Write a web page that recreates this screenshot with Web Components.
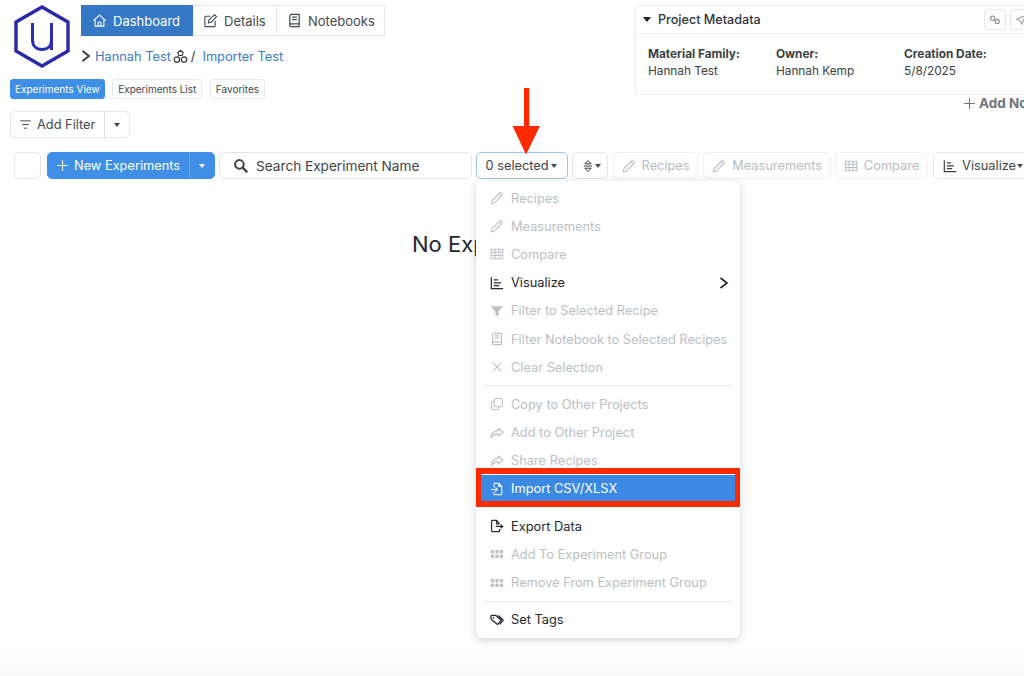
<!DOCTYPE html>
<html>
<head>
<meta charset="utf-8">
<title>Experiments</title>
<style>
html, body { margin: 0; background: #fff; }
body { width: 1024px; height: 676px; overflow: hidden; font-family: Inter, "Noto Sans", sans-serif; color: #2b3038; }
</style>
</head>
<body>
<app-page></app-page>
<script>
const ICONS = {
    home: '<path d="M1.500 8.200L8 2.300l6.500 5.900M3.300 7v7h9.400V7M6.500 14V9.800h3V14" fill="none" stroke="currentColor" stroke-width="1.100" stroke-linejoin="round"/>',
    edit: '<path d="M13 8.500v4.700a1.300 1.300 0 0 1-1.300 1.300H3.300A1.300 1.300 0 0 1 2 13.200V4.800a1.300 1.300 0 0 1 1.300-1.300h4.700M6.300 7.700l6-6 2.200 2.200-6 6-2.800.6z" fill="none" stroke="currentColor" stroke-width="1.200" stroke-linejoin="round"/>',
    book: '<path d="M3 3a1.500 1.500 0 0 1 1.500-1.500H13v10H4.500A1.500 1.500 0 0 0 3 13zM3 13a1.500 1.500 0 0 0 1.500 1.500H13v-3M5.500 4.500h5M5.500 7h5" fill="none" stroke="currentColor" stroke-width="1.300"/>',
    filter: '<path d="M2 3.500h12M4.500 8h7M6.500 12.500h3" fill="none" stroke="currentColor" stroke-width="1.200" stroke-linecap="round"/>',
    plus: '<path d="M8 2v12M2 8h12" fill="none" stroke="currentColor" stroke-width="1.300" stroke-linecap="round"/>',
    search: '<circle cx="6.800" cy="6.800" r="4.600" fill="none" stroke="currentColor" stroke-width="2.100"/><path d="M10.300 10.300l4.200 4.200" stroke="currentColor" stroke-width="2.400" stroke-linecap="round"/>',
    sort: '<path d="M4.800 5.800L8 2.500l3.200 3.300zM4.800 10.200L8 13.500l3.200-3.300z" fill="none" stroke="currentColor" stroke-width="1" stroke-linejoin="round"/><path d="M3.800 8h8.400" stroke="currentColor" stroke-width="1"/>',
    pencil: '<path d="M1.500 14.500l.9-3.600L11 2.200a1.300 1.300 0 0 1 1.800 0l1 1a1.300 1.300 0 0 1 0 1.800l-8.700 8.600zM10 3.300l2.800 2.800" fill="none" stroke="currentColor" stroke-width="1.200" stroke-linejoin="round"/>',
    table: '<path d="M1.500 2.500h13v11h-13zM1.500 6h13M1.500 9.700h13M5.800 2.500v11M10.200 2.500v11" fill="none" stroke="currentColor" stroke-width="1.200"/>',
    chart: '<path d="M1.500 1.500v13h13.500" fill="none" stroke="currentColor" stroke-width="1.400"/><path d="M4.500 4.500h4.500M4.500 7.800h8M4.500 11h6" stroke="currentColor" stroke-width="1.400"/>',
    funnel: '<path d="M1 2.500h14L9.800 8.600V14l-3.600-1.800V8.600z" fill="currentColor"/>',
    close: '<path d="M3 3l10 10M13 3L3 13" stroke="currentColor" stroke-width="1.200"/>',
    copy: '<path d="M6.500 1.800h6A1.700 1.700 0 0 1 14.200 3.500v6a1.700 1.700 0 0 1-1.700 1.700h-6a1.700 1.700 0 0 1-1.700-1.700v-6a1.700 1.700 0 0 1 1.700-1.700zM4.800 4.800H3.500A1.700 1.700 0 0 0 1.800 6.500v6a1.700 1.700 0 0 0 1.700 1.700h5A1.700 1.700 0 0 0 10.200 12.500v-1.300" fill="none" stroke="currentColor" stroke-width="1.200"/>',
    share: '<path d="M9.500 2.500L15 7l-5.500 4.500V9C6 9 3.300 10 1.300 13.500 1.500 8.800 4.500 5.300 9.500 5z" fill="none" stroke="currentColor" stroke-width="1.300" stroke-linejoin="round"/>',
    fileImport: '<path d="M4.500 6V2.500a1 1 0 0 1 1-1h4.700L13.500 5v8.500a1 1 0 0 1-1 1h-7a1 1 0 0 1-1-1V11M1 8.500h7.300M6 6.200l2.400 2.300L6 10.800M10 1.500V5h3.500" fill="none" stroke="currentColor" stroke-width="1.200" stroke-linejoin="round"/>',
    fileExport: '<path d="M11 5.500L7.500 1.500H2.800a1 1 0 0 0-1 1v11a1 1 0 0 0 1 1h7.200a1 1 0 0 0 1-1V11.500M7.500 1.500v4H11" fill="none" stroke="currentColor" stroke-width="1.400" stroke-linejoin="round"/><path d="M6.500 8.500h7.500M12.300 6.500l2.200 2-2.200 2" fill="none" stroke="currentColor" stroke-width="1.400"/>',
    dots: '<g fill="currentColor"><rect x="1" y="3.500" width="3.800" height="3.800" rx="1.200"/><rect x="6.100" y="3.500" width="3.800" height="3.800" rx="1.200"/><rect x="11.200" y="3.500" width="3.800" height="3.800" rx="1.200"/><rect x="1" y="8.700" width="3.800" height="3.800" rx="1.200"/><rect x="6.100" y="8.700" width="3.800" height="3.800" rx="1.200"/><rect x="11.200" y="8.700" width="3.800" height="3.800" rx="1.200"/></g>',
    tag: '<path d="M1 3.800a1 1 0 0 1 1-1h4.800l6 5.500-4.200 4.900L1.500 7.500zM9.500 2.800l5.500 5.500-3.800 4.700" fill="none" stroke="currentColor" stroke-width="1.400" stroke-linejoin="round"/><circle cx="4" cy="5.600" r=".9" fill="currentColor"/>',
    chevron: '<path d="M4.500 3L11 8l-6.500 5" fill="none" stroke="currentColor" stroke-width="1.700"/>',
    trio: '<g fill="none" stroke="currentColor" stroke-width="1.200"><path d="M8 1.500l2.800 2.200-1 3.200H6.200l-1-3.200z"/><circle cx="4.200" cy="11.300" r="2.900"/><circle cx="11.800" cy="11.300" r="2.900"/></g>',
    gears: '<g fill="none" stroke="currentColor" stroke-width="1.500"><circle cx="5" cy="5.500" r="2.800"/><circle cx="11" cy="10" r="2.800"/></g>',
    send: '<path d="M14 2L2 7l5 2 2 5z" fill="none" stroke="currentColor" stroke-width="1.300" stroke-linejoin="round"/>'
};

function icon(name, size) {
    return `<svg width="${size}" height="${size}" viewBox="0 0 16 16" aria-hidden="true">${ICONS[name]}</svg>`;
}

class UiElement extends HTMLElement {
    constructor() {
        super();
        this.attachShadow({ mode: 'open' });
    }
    connectedCallback() {
        this.shadowRoot.innerHTML = this.render();
    }
}

class AppLogo extends UiElement {
    render() {
        return `
            <style>:host { display: block; width: 56px; height: 63px; flex: none; } svg { display: block; }</style>
            <svg width="56" height="63" viewBox="0 0 56 63" aria-label="logo">
                <path d="M28 2L54 17V46L28 61L2 46V17Z" fill="none" stroke="#2828a8" stroke-width="3.400"/>
                <path d="M18.500 18V35c0 6 4 9.500 9.500 9.500s9.500-3.500 9.500-9.500V18M37.500 35v10" fill="none" stroke="#2c2cb0" stroke-width="3"/>
            </svg>`;
    }
}

class NavTab extends UiElement {
    render() {
        const active = this.hasAttribute('active');
        return `
            <style>
                :host { display: flex; align-items: center; gap: 6px; height: 31px; box-sizing: border-box; flex: none;
                    padding: 0 0 0 10px; font-size: 13px; white-space: nowrap;
                    color: ${active ? '#fff' : '#444a52'}; background: ${active ? '#3578c6' : '#fff'};
                    border: 1px solid ${active ? '#3578c6' : '#e6e8eb'}; border-left-width: ${active ? 1 : 0}px; }
                svg { display: block; }
            </style>
            ${icon(this.getAttribute('icon'), 15)}<slot></slot>`;
    }
}

class ViewPill extends UiElement {
    render() {
        const active = this.hasAttribute('active');
        return `
            <style>
                :host { display: flex; align-items: center; height: 20px; box-sizing: border-box; padding: 0 ${active ? 4 : 5}px;
                    font-size: 10px; white-space: nowrap; border-radius: 3px;
                    color: ${active ? '#fff' : '#3f444b'}; background: ${active ? '#3f8fe6' : '#fff'};
                    border: 1px solid ${active ? '#3f8fe6' : '#e6e8eb'}; }
            </style><slot></slot>`;
    }
}

class ToolButton extends UiElement {
    render() {
        const disabled = this.hasAttribute('disabled');
        const name = this.getAttribute('icon');
        const focus = this.hasAttribute('focus');
        return `
            <style>
                :host { display: flex; align-items: center; justify-content: center; gap: 6px; height: 27px; flex: none;
                    box-sizing: border-box; font-size: 12.800px; white-space: nowrap; border-radius: 5px;
                    color: ${disabled ? '#b9bdc2' : '#3f444b'}; background: #fff;
                    border: 1px solid ${focus ? '#9fc3e3' : disabled ? '#f0f1f3' : '#e4e6e9'}; }
                svg { display: block; }
                .caret { width: 0; height: 0; margin-left: -4px; border: 3.500px solid transparent; border-top: 4px solid #444a52; border-bottom: 0; }
            </style>
            ${name ? icon(name, this.getAttribute('icon-size') || 14) : ''}<slot></slot>${this.hasAttribute('caret') ? '<span class="caret"></span>' : ''}`;
    }
}

class SplitButton extends UiElement {
    render() {
        const primary = this.hasAttribute('primary');
        return `
            <style>
                :host { display: flex; height: 27px; box-sizing: border-box; flex: none; font-size: 12.800px; white-space: nowrap;
                    border-radius: 5px; color: ${primary ? '#fff' : '#444a52'}; background: ${primary ? '#3f8fe6' : '#fff'};
                    border: 1px solid ${primary ? '#3f8fe6' : '#e4e6e9'}; }
                .main { display: flex; align-items: center; gap: 5px; padding: 0 9px 0 8px; }
                .side { display: flex; align-items: center; justify-content: center; width: 24px;
                    border-left: 1px solid ${primary ? '#6ca8ea' : '#dfe1e4'}; }
                .caret { width: 0; height: 0; border: 3.500px solid transparent; border-top: 4px solid currentColor; border-bottom: 0; }
                svg { display: block; }
            </style>
            <div class="main">${icon(this.getAttribute('icon'), 13)}<slot></slot></div>
            <div class="side"><span class="caret"></span></div>`;
    }
}

class MenuItem extends UiElement {
    render() {
        const disabled = this.hasAttribute('disabled');
        const marked = this.hasAttribute('marked');
        return `
            <style>
                :host { display: flex; align-items: center; position: relative; height: 28.200px; box-sizing: border-box;
                    padding: 0 8px 0 14px; font-size: 12.800px; white-space: nowrap;
                    color: ${marked ? '#fff' : disabled ? '#bcc0c5' : '#24282e'}; background: ${marked ? '#3c89e3' : 'transparent'}; }
                svg { display: block; flex: none; }
                .label { margin-left: 7px; flex: 1; }
                .mark { position: absolute; left: 0; right: 0; top: -6.500px; bottom: -3.800px; border: 6px solid #ff2a00; border-width: 6px 5.500px; }
            </style>
            ${icon(this.getAttribute('icon'), 14)}
            <span class="label"><slot></slot></span>
            ${this.hasAttribute('submenu') ? icon('chevron', 16) : ''}
            ${marked ? '<span class="mark"></span>' : ''}`;
    }
}

class ActionMenu extends UiElement {
    render() {
        return `
            <style>
                :host { display: block; position: absolute; left: 476px; top: 181px; width: 264px; box-sizing: border-box;
                    padding: 3px 0 4px; background: #fff; border-radius: 6px;
                    box-shadow: 0 2px 8px rgba(30, 40, 60, .2); }
            </style><slot></slot>`;
    }
}

class MenuRule extends UiElement {
    render() {
        return `
            <style>:host { display: block; height: 1px; margin: 4px 7px; background: #e6e8eb; } :host([blank]) { background: none; }</style>`;
    }
}

class MetaField extends UiElement {
    render() {
        return `
            <style>
                :host { display: block; width: 128px; font-size: 11.800px; line-height: 17px; color: #3a3f46; }
                b { display: block; font-weight: 700; }
            </style>
            <b>${this.getAttribute('label')}</b><slot></slot>`;
    }
}

class MetadataPanel extends UiElement {
    render() {
        return `
            <style>
                :host { display: block; width: 420px; height: 90px; box-sizing: border-box; flex: none;
                    background: #fff; border: 1px solid #eceef0; border-radius: 4px; }
                header { display: flex; align-items: center; height: 28px; padding: 0 0 0 7px; box-sizing: border-box;
                    border-bottom: 1px solid #eceef0; font-size: 12.600px; font-weight: 500; color: #30353c; }
                .caret { width: 0; height: 0; border: 4px solid transparent; border-top: 5px solid #1e2125; border-bottom: 0; margin-right: 7px; }
                .title { flex: 1; }
                .tool { display: flex; align-items: center; justify-content: center; width: 22px; height: 21px;
                    margin-right: 4px; box-sizing: border-box; border: 1px solid #e6e8eb; border-radius: 3px; color: #8a8f96; }
                .tools { display: flex; margin-right: 18px; }
                .body { display: flex; padding: 12px 12px 0; }
            </style>
            <header>
                <span class="caret"></span><span class="title">Project Metadata</span>
                <span class="tools"><span class="tool">${icon('gears', 12)}</span><span class="tool">${icon('send', 12)}</span></span>
            </header>
            <div class="body"><slot></slot></div>`;
    }
}

class AppPage extends UiElement {
    render() {
        return `
            <style>
                :host { display: block; position: relative; width: 1024px; height: 676px; overflow: hidden;
                    background: linear-gradient(#fff 650px, #fafafa 676px); }
                .top { display: flex; padding: 5px 0 0 14px; height: 74px; box-sizing: border-box; }
                .nav { margin-left: 11px; width: 554px; flex: none; }
                .tabs { display: flex; }
                .crumbs { display: flex; align-items: center; margin-top: 11px; height: 18px; font-size: 12.800px; color: #3a7cc4; white-space: nowrap; }
                .pills { display: flex; gap: 7.500px; padding: 5px 0 0 10px; }
                .filter { display: flex; padding: 12px 0 0 10px; }
                .meta-col { flex: none; }
                .add-note { display: flex; align-items: center; gap: 3px; margin: 0 0 0 328px; height: 16px; font-size: 13.500px; font-weight: 700; color: #6f747a; white-space: nowrap; }
                .add-note svg { display: block; }
                .bar { display: flex; gap: 4px; padding: 14px 0 0 14px; width: 1100px; box-sizing: border-box; }
                .empty { padding: 52px 0 0 412px; font-size: 22px; line-height: 26px; color: #24282e; white-space: nowrap; }
                .arrow { position: absolute; left: 512px; top: 87px; display: block; }
            </style>
            <div class="top">
                <app-logo></app-logo>
                <div class="nav">
                    <div class="tabs">
                        <nav-tab icon="home" active style="width:112px">Dashboard</nav-tab>
                        <nav-tab icon="edit" style="width:84px">Details</nav-tab>
                        <nav-tab icon="book" style="width:108px">Notebooks</nav-tab>
                    </div>
                    <div class="crumbs">
                        <span style="margin-left:-3px;display:flex;color:#333">${icon('chevron', 16)}</span>
                        <span style="margin-left:1px">Hannah Test</span>
                        <span style="margin-left:2px;display:flex;color:#333">${icon('trio', 15)}</span>
                        <span style="color:#333;margin:0 7px 0 3px">/</span>
                        <span>Importer Test</span>
                    </div>
                </div>
                <div class="meta-col">
                    <metadata-panel>
                        <meta-field label="Material Family:">Hannah Test</meta-field>
                        <meta-field label="Owner:">Hannah Kemp</meta-field>
                        <meta-field label="Creation Date:">5/8/2025</meta-field>
                    </metadata-panel>
                    <div class="add-note">${icon('plus', 13)}<span>Add Notes</span></div>
                </div>
            </div>
            <div class="pills">
                <view-pill active>Experiments View</view-pill>
                <view-pill>Experiments List</view-pill>
                <view-pill>Favorites</view-pill>
            </div>
            <div class="filter"><split-button icon="filter">Add Filter</split-button></div>
            <div class="bar">
                <tool-button style="width:27px;margin-right:2px"></tool-button>
                <split-button primary icon="plus">New Experiments</split-button>
                <tool-button icon="search" icon-size="15" style="width:253px;justify-content:flex-start;padding-left:13px;font-size:13.600px;gap:8px">Search Experiment Name</tool-button>
                <tool-button focus caret style="width:92px;padding-right:2px">0 selected</tool-button>
                <tool-button icon="sort" icon-size="16" caret style="width:36px;gap:3px;margin-right:1px"></tool-button>
                <tool-button icon="pencil" disabled style="width:85px;margin-right:1px">Recipes</tool-button>
                <tool-button icon="pencil" disabled style="width:128px">Measurements</tool-button>
                <tool-button icon="table" disabled style="width:93px;margin-right:1px">Compare</tool-button>
                <tool-button icon="chart" caret style="width:100px;justify-content:flex-start;padding-left:9px;gap:5px">Visualize</tool-button>
            </div>
            <div class="empty">No Experiments</div>
            <action-menu>
                <menu-item icon="pencil" disabled>Recipes</menu-item>
                <menu-item icon="pencil" disabled>Measurements</menu-item>
                <menu-item icon="table" disabled>Compare</menu-item>
                <menu-item icon="chart" submenu>Visualize</menu-item>
                <menu-item icon="funnel" disabled>Filter to Selected Recipe</menu-item>
                <menu-item icon="book" disabled>Filter Notebook to Selected Recipes</menu-item>
                <menu-item icon="close" disabled>Clear Selection</menu-item>
                <menu-rule></menu-rule>
                <menu-item icon="copy" disabled>Copy to Other Projects</menu-item>
                <menu-item icon="share" disabled>Add to Other Project</menu-item>
                <menu-item icon="share" disabled>Share Recipes</menu-item>
                <menu-item icon="fileImport" marked>Import CSV/XLSX</menu-item>
                <menu-rule blank></menu-rule>
                <menu-item icon="fileExport">Export Data</menu-item>
                <menu-item icon="dots" disabled>Add To Experiment Group</menu-item>
                <menu-item icon="dots" disabled>Remove From Experiment Group</menu-item>
                <menu-rule></menu-rule>
                <menu-item icon="tag">Set Tags</menu-item>
            </action-menu>
            <svg class="arrow" width="28" height="68" viewBox="0 0 28 68" aria-hidden="true">
                <path d="M12 1h5.300v38H28L14 67.500L0.500 39H12z" fill="#ff2a00"/>
            </svg>`;
    }
}

[
    ['app-logo', AppLogo], ['nav-tab', NavTab], ['view-pill', ViewPill], ['tool-button', ToolButton],
    ['split-button', SplitButton], ['menu-item', MenuItem], ['action-menu', ActionMenu], ['menu-rule', MenuRule],
    ['meta-field', MetaField], ['metadata-panel', MetadataPanel], ['app-page', AppPage]
].forEach(([tag, cls]) => customElements.define(tag, cls));
</script>
</body>
</html>
